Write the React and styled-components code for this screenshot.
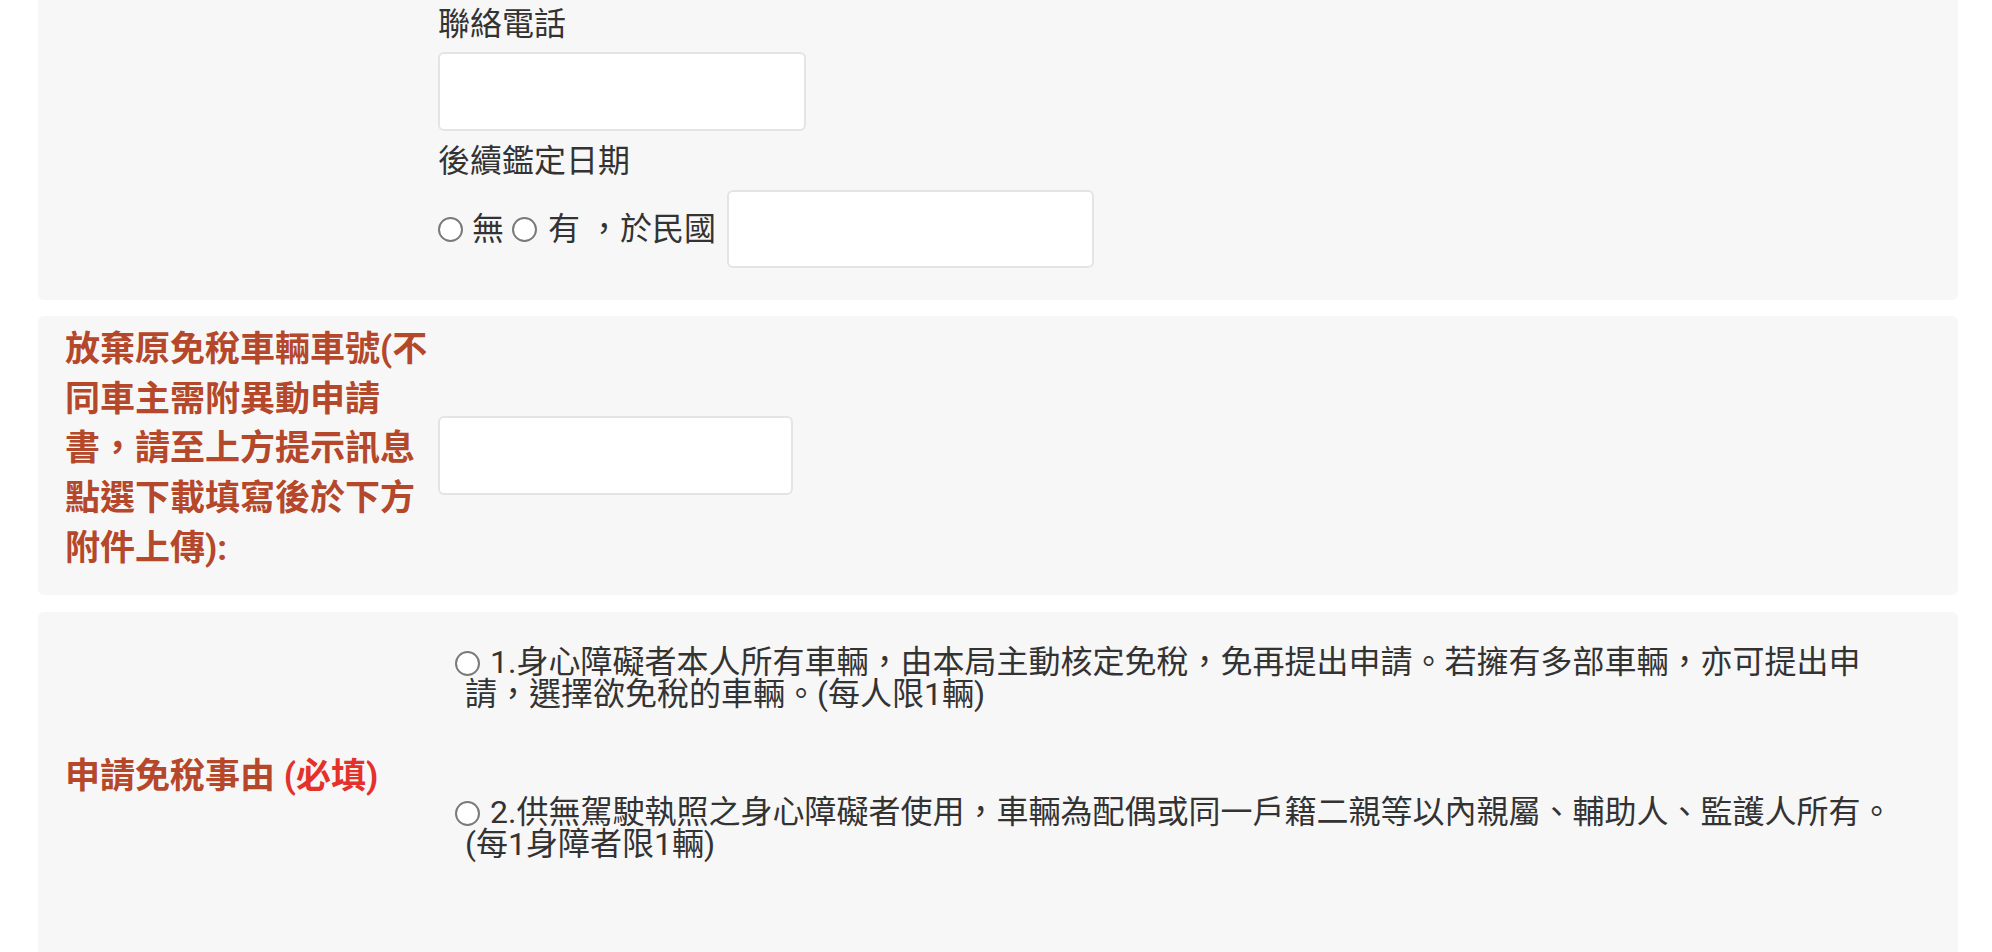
import React from 'react'
import styled, { createGlobalStyle } from 'styled-components'

const GlobalStyle = createGlobalStyle`
  html, body {
    margin: 0;
    padding: 0;
    background: #fff;
  }
  body {
    font-family: Roboto, "Noto Sans CJK TC", sans-serif;
    color: #333;
    overflow: hidden;
  }
`

const Page = styled.div`
  padding: 0 34px 0 38px;
  margin-top: -20px;
`

const Card = styled.section`
  display: grid;
  grid-template-columns: 400px 1fr;
  background: #f7f7f7;
  border-radius: 6px;
  margin-bottom: ${p => p.$gap || 16}px;
  padding: ${p => p.$pad || '0'};
`

const Label = styled.div`
  padding: ${p => p.$pad || '0 0 0 27px'};
  font-size: 35px;
  line-height: 49.7px;
  font-weight: 700;
  color: #b5472a;
  align-self: ${p => p.$align || 'start'};
`

const Required = styled.span`
  color: #e4322b;
`

const Fields = styled.div`
  display: flex;
  flex-direction: column;
  align-items: flex-start;
  align-self: ${p => p.$align || 'start'};
`

const FieldLabel = styled.div`
  font-size: 32px;
  line-height: 36px;
  color: #333;
  margin: ${p => p.$m || '0'};
`

const TextInput = styled.input`
  box-sizing: border-box;
  width: ${p => p.$w}px;
  height: ${p => p.$h || 79}px;
  border: 2px solid #e4e4e4;
  border-radius: 6px;
  background: #fff;
  margin: ${p => p.$m || '0'};
  outline: none;
  font-size: 28px;
`

const Row = styled.div`
  display: flex;
  align-items: center;
  margin-top: 11px;
  font-size: 32px;
  line-height: 36px;
  white-space: pre;
`

const Radio = styled.span.attrs({ role: 'radio', 'aria-checked': 'false' })`
  display: inline-block;
  box-sizing: border-box;
  width: 25px;
  height: 25px;
  margin: ${p => p.$m || '0 9px 0 0'};
  border: 2px solid #7a7a7a;
  border-radius: 50%;
  background: #fff;
  flex: none;
`

const Options = styled.div`
  padding: 34px 53px 100px 0;
`

const Option = styled.div`
  padding-left: 27px;
  font-size: 32px;
  line-height: 32px;
  color: #333;
  margin-bottom: ${p => p.$mb || 0}px;

  ${Radio} {
    vertical-align: -3px;
  }
`

export default function App() {
  return (
    <>
      <GlobalStyle />
      <Page>
        <Card $pad="26px 0 32px 0">
          <div />
          <Fields>
            <FieldLabel $m="0 0 10px 0">聯絡電話</FieldLabel>
            <TextInput $w={368} />
            <FieldLabel $m="12px 0 0 0">後續鑑定日期</FieldLabel>
            <Row>
              <Radio />
              <span>無 </span>
              <Radio $m="0 11px 0 0" />
              <span>有 ，於民國</span>
              <TextInput $w={367} $h={78} $m="0 0 0 11px" />
            </Row>
          </Fields>
        </Card>

        <Card $gap={17}>
          <Label $pad="9px 0 21px 27px">
            放棄原免稅車輛車號(不同車主需附異動申請書，請至上方提示訊息點選下載填寫後於下方附件上傳):
          </Label>
          <Fields $align="center">
            <TextInput $w={355} />
          </Fields>
        </Card>

        <Card>
          <Label $align="center" $pad="0 0 18px 27px">
            申請免稅事由 <Required>(必填)</Required>
          </Label>
          <Options>
            <Option $mb={86}>
              <Radio $m="0 10px 0 -10px" />
              1.身心障礙者本人所有車輛，由本局主動核定免稅，免再提出申請。若擁有多部車輛，亦可提出申請，選擇欲免稅的車輛。(每人限1輛)
            </Option>
            <Option>
              <Radio $m="0 10px 0 -10px" />
              2.供無駕駛執照之身心障礙者使用，車輛為配偶或同一戶籍二親等以內親屬、輔助人、監護人所有。(每1身障者限1輛)
            </Option>
          </Options>
        </Card>
      </Page>
    </>
  )
}
